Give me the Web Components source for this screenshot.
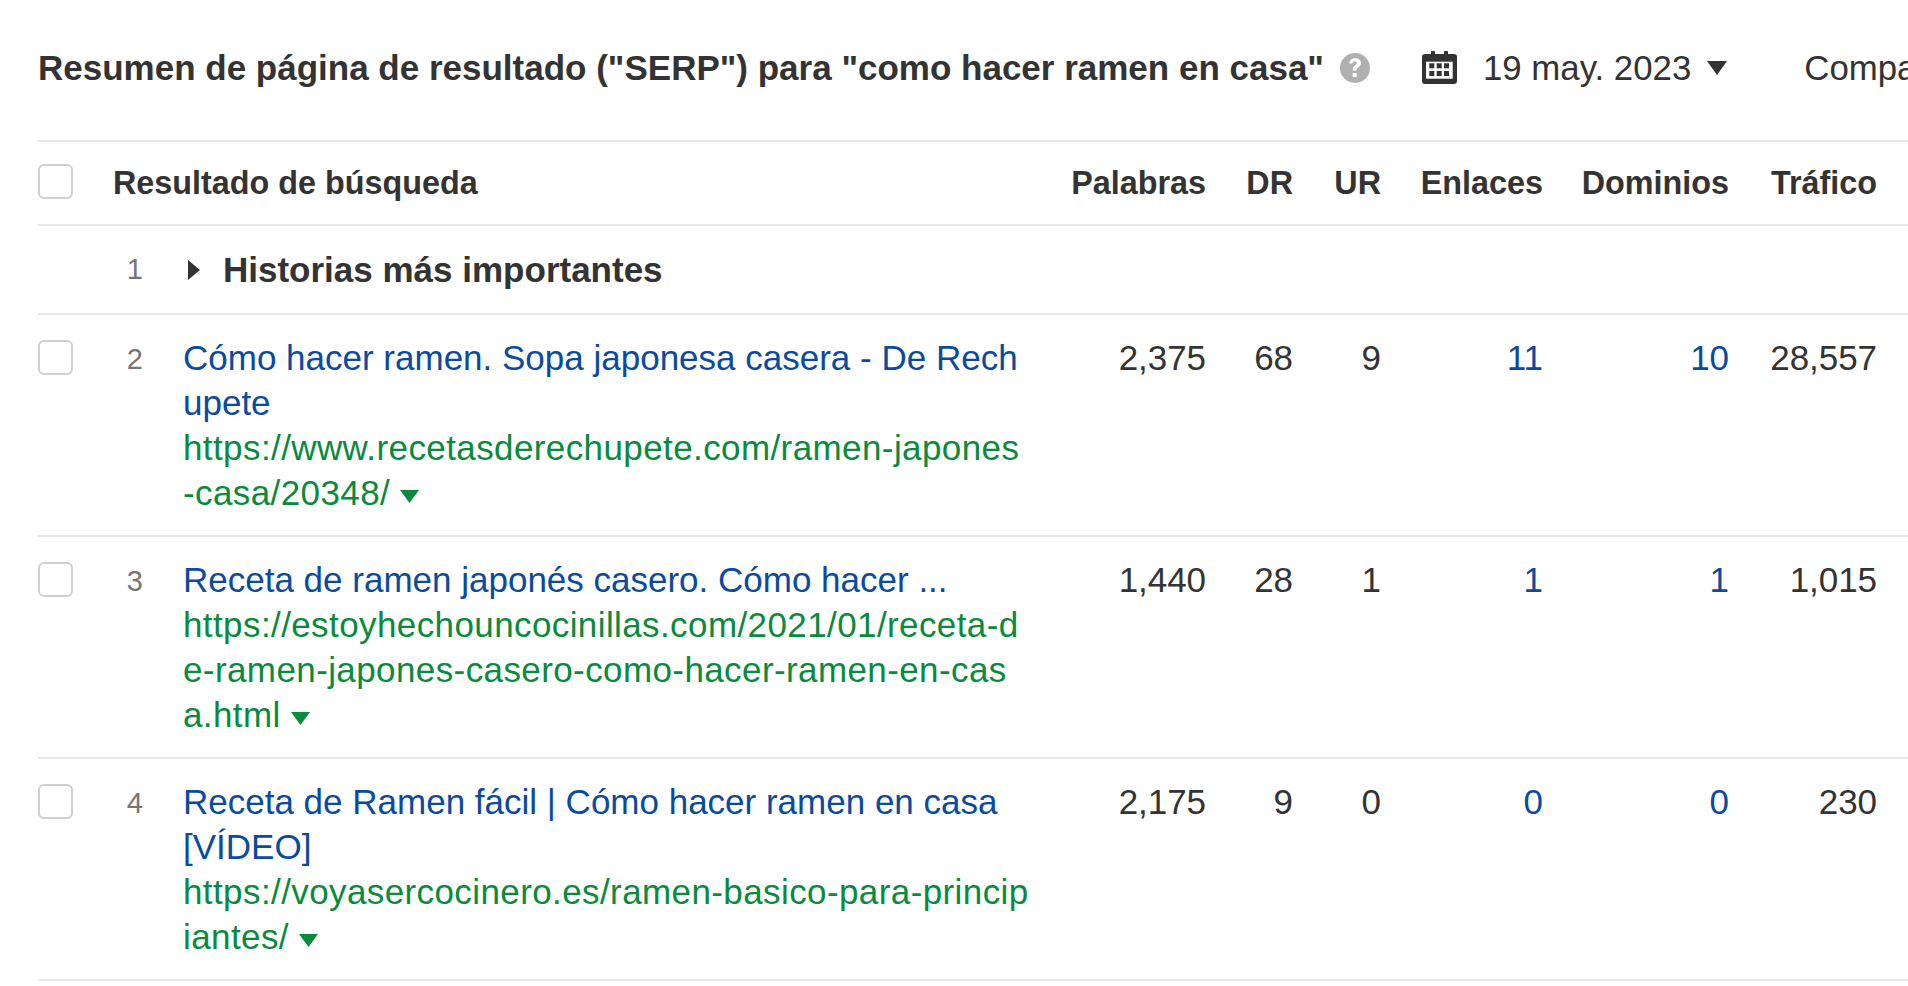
<!DOCTYPE html>
<html lang="es"><head><meta charset="utf-8"><title>SERP</title>
<style>
html,body{margin:0;padding:0;background:#fff;overflow:hidden;width:1908px;height:986px}
body{font-family:"Liberation Sans",Arial,sans-serif;color:#333;font-size:35px}
</style></head><body>
<serp-page>
  <serp-header slot="header" date="19 may. 2023" compare="Comparar con">Resumen de página de resultado ("SERP") para "como hacer ramen en casa"</serp-header>
  <serp-table>
    <serp-head-row></serp-head-row>
    <serp-group-row pos="1">Historias más importantes</serp-group-row>
    <serp-row pos="2" title="Cómo hacer ramen. Sopa japonesa casera - De Rechupete" url="https://www.recetasderechupete.com/ramen-japones|-casa/20348/" words="2,375" dr="68" ur="9" links="11" domains="10" traffic="28,557"></serp-row>
    <serp-row pos="3" title="Receta de ramen japonés casero. Cómo hacer ..." url="https://estoyhechouncocinillas.com/2021/01/receta-d|e-ramen-japones-casero-como-hacer-ramen-en-cas|a.html" words="1,440" dr="28" ur="1" links="1" domains="1" traffic="1,015"></serp-row>
    <serp-row pos="4" title="Receta de Ramen fácil | Cómo hacer ramen en casa [VÍDEO]" url="https://voyasercocinero.es/ramen-basico-para-princip|iantes/" words="2,175" dr="9" ur="0" links="0" domains="0" traffic="230"></serp-row>
  </serp-table>
</serp-page>
<script>
const GRID = 'display:grid;grid-template-columns:35px 70px 40px 847px 176px 87px 88px 162px 186px 148px;';
function def(name, css, html){
  customElements.define(name, class extends HTMLElement{
    connectedCallback(){
      if(this.shadowRoot) return;
      const r=this.attachShadow({mode:'open'});
      const g=k=>(this.getAttribute(k)||'');
      r.innerHTML='<style>'+css+'</style>'+(typeof html==='function'?html(g):html);
    }
  });
}
def('serp-page',':host{display:block;padding:0 0 0 38px;width:1870px;overflow:hidden}','<slot name="header"></slot><slot></slot>');
def('serp-checkbox',':host{display:block;box-sizing:border-box;width:35px;height:35px;border:2px solid #cfcfcf;border-radius:6px;background:#fff}','');
def('serp-header',`
:host{display:flex;align-items:center;height:141px;box-sizing:border-box;padding-bottom:6px;white-space:nowrap}
h1{margin:0;font:700 35px/40px "Liberation Sans",Arial,sans-serif;color:#333}
.q{margin-left:16px;flex:none;display:block}
.cal{margin-left:52px;flex:none;display:block}
.date{margin-left:26px;font-size:34.8px;color:#333}
.tri{margin-left:16px;flex:none;display:block}
.cmp{margin-left:77px;font-size:34.8px;color:#333}
`, g=>`<h1><slot></slot></h1>
<svg class="q" width="30" height="30" viewBox="0 0 30 30"><circle cx="15" cy="15" r="15" fill="#b0b0b0"/><g transform="translate(15 14.500) scale(1.2) translate(-15 -15)" fill="#fff"><path d="M10.300 11.600c.2-2.900 2.200-4.400 4.900-4.400 2.800 0 4.800 1.600 4.800 4 0 1.700-.9 2.700-2.200 3.600-1.200.8-1.500 1.300-1.500 2.600h-3.200c-.1-2 .5-3.100 1.900-4.100 1-.7 1.500-1.200 1.500-2 0-.9-.7-1.500-1.700-1.500-1.100 0-1.800.7-1.900 1.900z"/><rect x="13" y="19.600" width="3.400" height="3.300" rx=".5"/></g></svg>
<svg class="cal" width="35" height="33" viewBox="0 0 35 33"><path d="M3 3h6V.8q0-.8.8-.8h2.400q.8 0 .8.800V3h9V.8q0-.8.8-.8h2.400q.8 0 .8.800V3h6q3 0 3 3v24q0 3-3 3H3q-3 0-3-3V6q0-3 3-3z" fill="#333"/><rect x="4" y="10.700" width="26.700" height="17" fill="#fff"/><g fill="#333"><rect x="7.300" y="12.300" width="5" height="5"/><rect x="14.700" y="12.300" width="5" height="5"/><rect x="22" y="12.300" width="5" height="5"/><rect x="7.300" y="20" width="5" height="5"/><rect x="14.700" y="20" width="5" height="5"/><rect x="22" y="20" width="5" height="5"/></g></svg>
<span class="date">${g('date')}</span>
<svg class="tri" width="20" height="14" viewBox="0 0 20 14"><path d="M0 0h20L10 14z" fill="#333"/></svg>
<span class="cmp">${g('compare')}</span>`);
def('serp-table',':host{display:block;border-top:2px solid #e8e8e8;margin-top:-1px}','<slot></slot>');
const numCss=`.n{text-align:right;white-space:nowrap}`;
def('serp-head-row',`
:host{${GRID}align-items:center;height:82px;border-bottom:2px solid #e8e8e8;font-weight:700;font-size:32.35px;color:#333}
serp-checkbox{margin-top:-3px}
.t{grid-column:2 / 5;padding-left:40px}
${numCss}`,`<serp-checkbox></serp-checkbox><div class="t">Resultado de búsqueda</div><div class="n">Palabras</div><div class="n">DR</div><div class="n">UR</div><div class="n">Enlaces</div><div class="n">Dominios</div><div class="n">Tráfico</div>`);
def('serp-group-row',`
:host{${GRID}align-items:center;height:87px;border-bottom:2px solid #e8e8e8}
.p{grid-column:2;text-align:right;color:#767676;font-size:29px}
.m{grid-column:3 / 5;display:flex;align-items:center;padding-left:41px;font-weight:700;font-size:35px;color:#333}
svg{flex:none;margin-right:23px;margin-left:4px;display:block}
`,g=>`<div class="p">${g('pos')}</div><div class="m"><svg width="12" height="20" viewBox="0 0 12 20"><path d="M0 0l12 10L0 20z" fill="#333"/></svg><slot></slot></div>`);
def('serp-row',`
:host{${GRID}align-items:start;height:220px;border-bottom:2px solid #e8e8e8;font-size:35px;line-height:45px;color:#333}
serp-checkbox{margin-top:25px}
.p{text-align:right;color:#767676;font-size:29px;padding-top:22px}
.c{grid-column:4;padding-top:20px;word-break:break-all;min-width:0}
a{color:#0a4a9f;text-decoration:none;display:block}
.u{color:#0a8a3c;letter-spacing:.4px;white-space:nowrap}
.u svg{display:inline-block;margin-left:10px;vertical-align:2px}
.v{padding-top:20px;letter-spacing:-.05px}
.b{color:#0a4a9f}
${numCss}`,g=>`<serp-checkbox></serp-checkbox><div class="p">${g('pos')}</div><div class="c"><a href="#">${g('title')}</a><a class="u" href="#">${g('url').split('|').join('<br>')}<svg width="19" height="13" viewBox="0 0 19 13"><path d="M0 0h19L9.500 13z" fill="#0a8a3c"/></svg></a></div><div class="n v">${g('words')}</div><div class="n v">${g('dr')}</div><div class="n v">${g('ur')}</div><div class="n v b">${g('links')}</div><div class="n v b">${g('domains')}</div><div class="n v">${g('traffic')}</div>`);
</script>
</body></html>
